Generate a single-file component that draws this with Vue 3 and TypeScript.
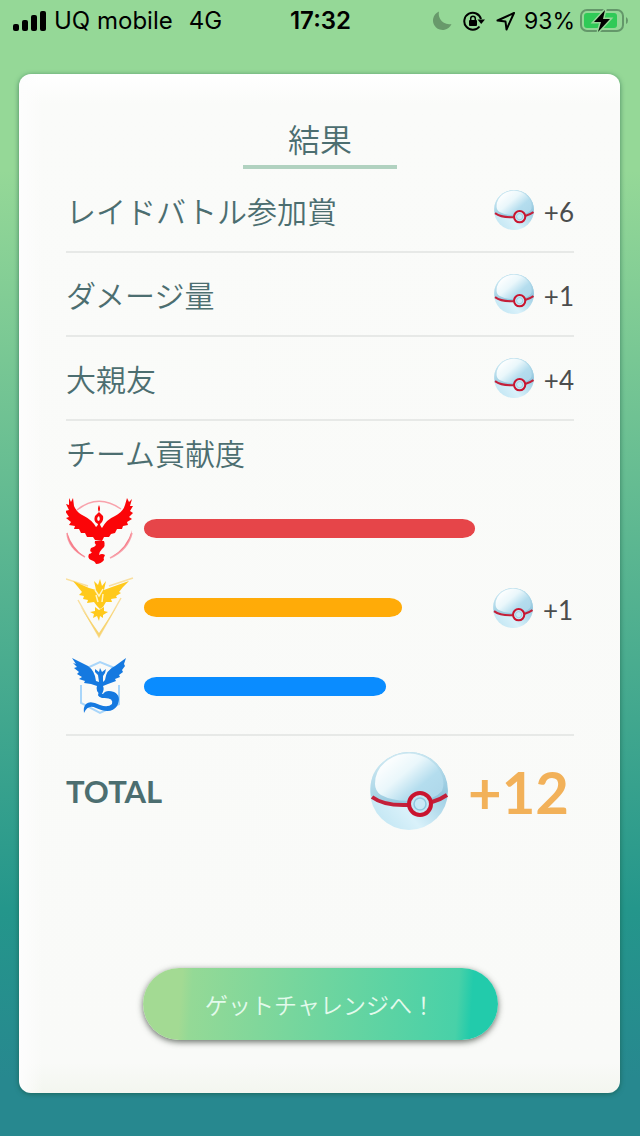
<script setup lang="ts">
interface Reward {
  label: string
  bonus: string
}
interface Team {
  id: 'valor' | 'instinct' | 'mystic'
  name: string
  share: number
  bonus?: string
}

const rewards: Reward[] = [
  { label: 'レイドバトル参加賞', bonus: '+6' },
  { label: 'ダメージ量', bonus: '+1' },
  { label: '大親友', bonus: '+4' },
]
const teams: Team[] = [
  { id: 'valor', name: 'Valor', share: 100 },
  { id: 'instinct', name: 'Instinct', share: 78, bonus: '+1' },
  { id: 'mystic', name: 'Mystic', share: 73 },
]
</script>

<template>
  <div class="screen">
    <svg class="defs" aria-hidden="true">
      <defs>
        <linearGradient id="ball-base" x1="0.1" y1="0.9" x2="0.8" y2="0.3">
          <stop offset="0" stop-color="#c2e6f3" />
          <stop offset="0.4" stop-color="#d9f1fa" />
          <stop offset="1" stop-color="#9bcde3" />
        </linearGradient>
        <linearGradient id="ball-edge" x1="0.2" y1="0" x2="0.6" y2="1">
          <stop offset="0" stop-color="#d3ebf3" />
          <stop offset="0.5" stop-color="#b4dbea" />
          <stop offset="1" stop-color="#8fc4dc" />
        </linearGradient>
        <linearGradient id="ball-top" x1="0.15" y1="0.1" x2="0.95" y2="0.75">
          <stop offset="0" stop-color="#ffffff" />
          <stop offset="0.4" stop-color="#eaf7fb" />
          <stop offset="0.75" stop-color="#b4ddee" />
          <stop offset="1" stop-color="#b0d9eb" />
        </linearGradient>
        <symbol id="ball" viewBox="0 0 78 78">
          <circle cx="39" cy="39" r="39" fill="url(#ball-base)" />
          <path d="M1 44Q-2 22 13 10Q25 0 39 0Q56 0 67 12Q79 26 77 42Q70 49 60 50Q49 53 39 52Q15 52 1 44Z" fill="url(#ball-edge)" />
          <path d="M5 32Q5 17 18 8Q30 0 45 2Q61 5 69 18Q76 29 72 39Q64 48 49 48Q26 51 11 43Q5 39 5 32Z" fill="url(#ball-top)" />
          <path d="M2 45Q14 54 38 53M62 50Q70 48 77 43" fill="none" stroke="#c3203a" stroke-width="4" />
          <circle cx="50" cy="52" r="11" fill="#c5e7f4" stroke="#c9142f" stroke-width="4" />
          <circle cx="50" cy="52" r="6" fill="#c9eaf7" stroke="#8fc8df" stroke-width="1.5" />
        </symbol>
      </defs>
    </svg>

    <header class="status">
      <div class="carrier">
        <svg width="34" height="22" viewBox="0 0 34 22" aria-hidden="true">
          <rect x="0" y="14" width="6" height="7" rx="2" />
          <rect x="9" y="10" width="6" height="11" rx="2" />
          <rect x="18" y="5" width="6" height="16" rx="2" />
          <rect x="27" y="1" width="6" height="20" rx="2" />
        </svg>
        <span>UQ mobile</span>
        <span class="network">4G</span>
      </div>
      <time class="clock">17:32</time>
      <div class="indicators">
        <svg width="20" height="20" viewBox="0 0 20 20" aria-hidden="true">
          <path d="M7 0.500A9.600 9.600 0 1 0 19.500 13A10.500 10.500 0 0 1 7 0.500Z" fill="#68996b" />
        </svg>
        <svg class="lock" width="22" height="20" viewBox="0 0 22 20" aria-hidden="true">
          <path d="M16.500 15.500A8.500 8.500 0 1 1 18 8" fill="none" stroke="#000" stroke-width="2" />
          <path d="M14.500 8.500H22L18.200 13Z" />
          <rect x="6" y="9" width="8" height="6" rx="1" />
          <path d="M7.700 9V7.500A2.300 2.300 0 0 1 12.300 7.500V9" fill="none" stroke="#000" stroke-width="1.500" />
        </svg>
        <svg class="arrow" width="20" height="20" viewBox="0 0 20 20" aria-hidden="true">
          <path d="M18 2L1.500 9.500L9.500 10.500L10.500 18.500Z" fill="none" stroke="#000" stroke-width="2" stroke-linejoin="round" />
        </svg>
        <span>93%</span>
        <svg class="battery" width="48" height="26" viewBox="0 0 48 26" aria-hidden="true">
          <rect x="1" y="2" width="42" height="21" rx="6" fill="none" stroke="#64976a" stroke-width="2" />
          <path d="M46 9Q48 10 48 12.500Q48 15 46 16Z" fill="#64976a" />
          <rect x="4" y="5" width="33" height="15" rx="3" fill="#30ca57" />
          <path d="M25 2L14 14H21L18 24L30 11H23Z" fill="#000" stroke="#95d897" stroke-width="3" paint-order="stroke" />
        </svg>
      </div>
    </header>

    <main class="card">
      <h1 class="title">結果</h1>

      <ul class="list">
        <li v-for="r in rewards" :key="r.label" class="row">
          <span>{{ r.label }}</span>
          <span class="bonus">
            <svg class="ball" aria-hidden="true"><use href="#ball" /></svg>
            <span class="count">{{ r.bonus }}</span>
          </span>
        </li>
      </ul>

      <section class="teams">
        <h2 class="heading">チーム貢献度</h2>
        <div v-for="t in teams" :key="t.id" class="team">
          <svg v-if="t.id === 'valor'" class="emblem" viewBox="1 -4 70 70" role="img" :aria-label="t.name">
            <g fill="none" stroke="#f8a3ac" stroke-width="1.500">
              <path d="M12 12Q33-5 56 11" />
              <path d="M2 35Q3 50 20 59M67 35Q63 52 45 60" />
            </g>
            <path d="M2 34Q3 51 20 59Q7 50 2 34ZM67 32Q65 50 46 59Q62 50 67 32Z" fill="#f77f8b" />
            <path fill="#fb0508" d="M4 0L6 4L8 0L9 8Q12 15 19 18Q27 22 31 29L34 26L37 30Q42 21 50 18Q58 14 60 7L62 0L64 4L67 1L65 8L68 8L65 13L68 15L64 19L67 21L62 24L63 27L58 28L57 31L52 31L50 35L46 36L44 39L39 39L37 43L30 42L28 39L22 39L20 35L16 35L14 31L9 31L10 28L4 27L6 24L1 20L4 19L0 13L4 12L1 6L4 7Z" />
            <path fill="#fb0508" d="M34 7Q36 11 34 14L38 18Q39 23 35 26L36 31H32L33 26Q28 24 30 18L34 14Q32 11 34 7ZM34 18Q31 20 33 23Q36 23 34 18Z" fill-rule="evenodd" />
            <path fill="#fb0508" d="M30 43L39 43Q41 48 37 51Q34 54 34 57Q37 55 40 57Q38 60 39 62Q36 66 31 66Q30 63 26 62Q22 60 24 56Q26 56 27 54Q24 54 26 50Q30 49 31 47Q29 45 30 43Z" />
          </svg>
          <svg v-else-if="t.id === 'instinct'" class="emblem" viewBox="1 0 70 70" role="img" :aria-label="t.name">
            <path d="M1 6L23 13M68 5L44 13M13 27L34 64L56 25" fill="none" stroke="#f9df9e" stroke-width="1.500" />
            <path d="M15 33L34 64L52 33L34 60Z" fill="#f7d470" />
            <path fill="#ffc91b" d="M8 8L24 15L31 17L29 8L33 12L35 6L37 13L41 8L39 17L47 14L64 8L58 14L54 19L56 20L51 23L52 25L46 26L47 29L41 29L38 34L35 36L32 33L29 29L22 30L23 27L18 26L19 23L14 22L17 19Z" />
            <path d="M30 17L34 23L38 16M33 29L31 22M37 29L38 21" fill="none" stroke="#fff4c5" stroke-width="1.500" />
            <path fill="#ffc91b" d="M30 34L34 37L39 34L39 38L43 39L38 42L38 45L35 43L34 48L32 43L28 45L29 41L25 39L30 38Z" />
          </svg>
          <svg v-else class="emblem" viewBox="0 -6 70 70" role="img" :aria-label="t.name">
            <path d="M19 11L34 4L51 11M15 27V45L34 55L53 46V27" fill="none" stroke="#a9d6fa" stroke-width="2" />
            <path fill="#1579e0" d="M6 0L22 8Q29 13 30 23L33 24L32 17L29 14L29 11L33 14L34 10L36 14L40 11L39 15L37 18L37 24L39 22Q40 12 49 8L60 0L58 6L59 8L56 12L57 14L53 17L54 19L49 21L50 23L42 26L37 28Q39 32 35 37Q29 33 31 28L25 26L18 25L19 23L13 21L16 19L11 16L13 14L8 10L11 9L7 5L10 6Z" />
            <path fill="#1579e0" d="M34 33Q29 38 36 40Q48 39 46 46Q42 50 34 47Q24 42 20 46Q17 49 18 55Q22 46 30 50Q45 57 51 48Q56 38 48 34Q40 31 37 36Q34 36 34 33Z" />
          </svg>
          <div class="track">
            <div class="bar" :class="t.id" :style="{ width: t.share + '%' }"></div>
          </div>
          <span class="bonus team-bonus">
            <template v-if="t.bonus">
              <svg class="ball" aria-hidden="true"><use href="#ball" /></svg>
              <span class="count">{{ t.bonus }}</span>
            </template>
          </span>
        </div>
      </section>

      <div class="total">
        <strong class="total-label">TOTAL</strong>
        <svg class="ball-large" aria-hidden="true"><use href="#ball" /></svg>
        <strong class="sum">+12</strong>
      </div>

      <button type="button" class="go">ゲットチャレンジへ！</button>
    </main>
  </div>
</template>

<style>
body {
  margin: 0;
}
</style>

<style scoped>
.screen {
  box-sizing: border-box;
  min-height: 100vh;
  display: flex;
  flex-direction: column;
  padding-bottom: 43px;
  background: linear-gradient(#95d897 0%, #95d897 15%, #24968b 80%, #27888f 95%, #27888f 100%);
  font-family: Lato, "Noto Sans CJK JP", sans-serif;
  color: #4c6e70;
}
.defs {
  position: absolute;
  width: 0;
  height: 0;
}
.status {
  display: grid;
  grid-template-columns: 1fr auto 1fr;
  align-items: center;
  height: 42px;
  margin-bottom: 32px;
  padding: 0 12px 0 13px;
  font: 24px/42px Inter, sans-serif;
  color: #000;
}
.carrier,
.indicators {
  display: flex;
  align-items: center;
}
.carrier {
  gap: 7px;
}
.network {
  margin-left: 9px;
}
.clock {
  font-weight: 600;
}
.indicators {
  justify-content: flex-end;
  font-size: 23px;
}
.lock {
  margin-left: 11px;
}
.arrow {
  margin: 0 8px 0 11px;
}
.battery {
  margin-left: 5px;
}
.card {
  flex: 1;
  display: flex;
  flex-direction: column;
  margin: 0 20px 0 19px;
  padding: 0 46px 53px 47px;
  border-radius: 12px;
  background:
    linear-gradient(90deg, #fdfdfd 0, rgba(253, 253, 253, 0) 24px),
    linear-gradient(#fff 0, #fafbf9 30px, #f9faf8 calc(100% - 30px), #f3f6ef 100%);
  box-shadow: 0 1px 5px rgba(20, 80, 60, 0.6);
}
.title {
  align-self: center;
  box-sizing: border-box;
  width: 154px;
  margin: 0;
  padding-top: 40px;
  border-bottom: 4px solid #b1d2c0;
  font-size: 32px;
  font-weight: 350;
  line-height: 51px;
  text-align: center;
}
.list {
  margin: 0;
  padding: 0;
  list-style: none;
}
.row {
  box-sizing: border-box;
  display: flex;
  align-items: center;
  justify-content: space-between;
  height: 84px;
  border-bottom: 2px solid #e7e9e7;
  font-size: 30px;
  font-weight: 350;
}
.bonus {
  display: flex;
  align-items: center;
  gap: 10px;
  font-size: 26px;
  font-weight: 400;
  color: #4b4d4d;
}
.count {
  padding-top: 4px;
}
.ball {
  width: 40px;
  height: 40px;
}
.heading {
  margin: 0;
  padding-bottom: 4px;
  font-size: 30px;
  font-weight: 350;
  line-height: 64px;
}
.teams {
  padding-bottom: 8px;
  border-bottom: 2px solid #e7e9e7;
}
.team {
  display: flex;
  align-items: center;
  height: 79px;
}
.emblem {
  flex: none;
  width: 70px;
  height: 70px;
  margin-right: 8px;
}
.track {
  flex: 1;
}
.bar {
  height: 19px;
  border-radius: 13px / 10px;
}
.valor {
  background: #e64549;
}
.instinct {
  background: #ffab08;
}
.mystic {
  background: #0a8cff;
}
.team-bonus {
  width: 81px;
  margin-left: 18px;
}
.total {
  display: flex;
  align-items: center;
  height: 110px;
  padding-right: 5px;
}
.total-label {
  margin-right: auto;
  font-size: 31px;
}
.ball-large {
  width: 78px;
  height: 78px;
  margin-right: 20px;
}
.sum {
  font-size: 58px;
  color: #f2b159;
}
.go {
  align-self: center;
  width: 355px;
  height: 72px;
  margin-top: auto;
  padding: 0;
  border: 0;
  border-radius: 36px;
  background: linear-gradient(94deg, #a3da93 0%, #a3da93 11%, #94d996 14%, #48d1a8 88%, #22cbab 92%, #22cbab 100%);
  box-shadow: 0 2px 6px rgba(40, 50, 40, 0.7);
  font: 350 23px/72px "Noto Sans CJK JP", sans-serif;
  color: #e3faec;
}
</style>
